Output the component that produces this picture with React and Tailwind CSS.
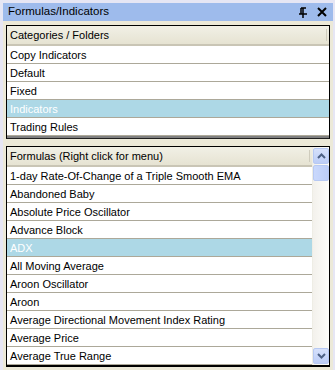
import React from "react";

const font = { fontFamily: '"Liberation Sans", Arial, sans-serif' };

function Row({ children, selected }) {
  return (
    <div
      className={`h-[18px] leading-[18px] pl-[3px] border-b border-[#aca899] whitespace-nowrap overflow-hidden ${
        selected ? "bg-[#add8e6] text-white" : "bg-white text-black"
      }`}
    >
      {children}
    </div>
  );
}

function Header({ children, divider }) {
  return (
    <div className="h-[20px] leading-[19px] pl-[3px] bg-gradient-to-b from-[#f1f0e6] to-[#e6e3d2] border-b-2 border-[#c9c5b5] text-black whitespace-nowrap flex">
      <span className="flex-1">{children}</span>
      {divider && <span className="w-[1px] my-[3px] bg-[#cfccbd] mr-[2px]" />}
    </div>
  );
}

function Chevron({ up }) {
  return (
    <svg width="9" height="6" viewBox="0 0 9 6">
      <path
        d={up ? "M1 5 L4.5 1.5 L8 5" : "M1 1 L4.5 4.5 L8 1"}
        fill="none"
        stroke="#4d6185"
        strokeWidth="2"
      />
    </svg>
  );
}

function ScrollBtn({ children }) {
  return (
    <div className="h-[16px] w-[16px] mx-auto rounded-[2px] border border-[#b7c9f3] bg-gradient-to-b from-[#d6e1fb] to-[#bccdf7] flex items-center justify-center">
      {children}
    </div>
  );
}

export default function App() {
  const cats = ["Copy Indicators", "Default", "Fixed", "Indicators", "Trading Rules"];
  const formulas = [
    "1-day Rate-Of-Change of a Triple Smooth EMA",
    "Abandoned Baby",
    "Absolute Price Oscillator",
    "Advance Block",
    "ADX",
    "All Moving Average",
    "Aroon Oscillator",
    "Aroon",
    "Average Directional Movement Index Rating",
    "Average Price",
    "Average True Range",
  ];
  return (
    <div
      className="w-[335px] h-[370px] bg-[#e6e6f4] pt-[3px] pl-[3px] pr-[2px] flex flex-col text-[11px] overflow-hidden"
      style={font}
    >
      <div className="h-[18px] bg-[#9ebbec] flex items-center pl-[5px] pr-[4px] text-black text-[11.5px]">
        <span className="flex-1">Formulas/Indicators</span>
        <svg width="10" height="11" viewBox="0 0 10 11" className="mr-[9px]">
          <path d="M3 1 H8 M3 1 V7 M5 1 V7 M1 7 H9 M5 7 V11" stroke="#000" strokeWidth="1.5" fill="none" />
        </svg>
        <svg width="10" height="10" viewBox="0 0 10 10" className="mr-[2px]">
          <path d="M1 1 L9 9 M9 1 L1 9" stroke="#000" strokeWidth="2" />
        </svg>
      </div>
      <div className="flex-1 bg-[#ece9d8] px-[3px] pt-[4px] flex flex-col">
        <div className="border border-black border-b-[#202020] bg-white">
          <Header divider>Categories / Folders</Header>
          {cats.map((c) => (
            <Row key={c} selected={c === "Indicators"}>
              {c}
            </Row>
          ))}
          <div className="h-[2px] bg-[#808080]" />
        </div>
        <div className="mt-[7px] border border-black border-b-2 bg-white flex">
          <div className="flex-1 min-w-0 overflow-hidden">
            <Header divider>Formulas (Right click for menu)</Header>
            {formulas.map((f) => (
              <Row key={f} selected={f === "ADX"}>
                {f}
              </Row>
            ))}
          </div>
          <div className="w-[17px] bg-gradient-to-r from-[#f3f1ec] to-[#fdfdfa] flex flex-col pt-[1px] pb-[1px] border-l border-[#eeede5]">
            <ScrollBtn>
              <Chevron up />
            </ScrollBtn>
            <div className="mt-[1px] h-[16px] w-[16px] mx-auto rounded-[2px] border border-[#b7c9f3] bg-gradient-to-r from-[#c9d8fc] to-[#bccdf7]" />
            <div className="flex-1" />
            <ScrollBtn>
              <Chevron />
            </ScrollBtn>
          </div>
        </div>
      </div>
    </div>
  );
}
